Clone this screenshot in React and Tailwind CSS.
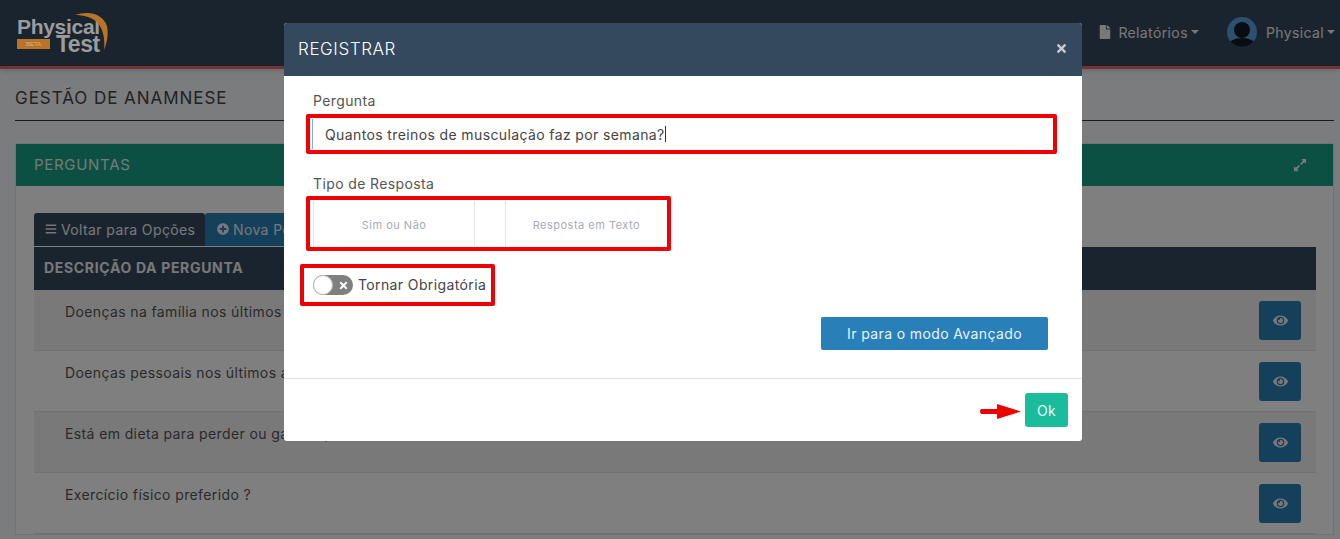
import React from 'react'
import { FaBars, FaEye, FaExpandAlt, FaFile, FaPlusCircle, FaTimes } from 'react-icons/fa'

const font = { fontFamily: 'Inter, "Noto Sans", sans-serif' }

const perguntas = [
  'Doenças na família nos últimos 12 meses ?',
  'Doenças pessoais nos últimos anos ?',
  'Está em dieta para perder ou ganhar peso ?',
  'Exercício físico preferido ?',
]

const Logo = () => (
  <div className="relative z-10 h-[35px] w-[96px] mt-[5px] text-[#9c9c9c] font-bold tracking-normal font-['Liberation_Sans']">
    <div className="text-[21px] leading-[17px] h-[17px] tracking-[-0.3px]">Physical</div>
    <div className="flex items-center gap-[6px] h-[18px]">
      <span className="bg-[#b8752a] text-[#d9ad7e] text-[6px] font-normal leading-none w-[33px] h-[10px] flex items-center justify-center">BETA</span>
      <span className="text-[23px] leading-[18px] tracking-[-0.5px]">Test</span>
    </div>
    <svg className="absolute left-[56px] top-[-6px]" width="38" height="42" viewBox="0 0 38 42" fill="none">
      <path d="M2 3 C16 -2 30 2 34 14 C36 24 33 33 31 38 C32 29 31 19 25 11 C19 5 10 3 2 3 Z" fill="#b8752a" />
    </svg>
  </div>
)

const Avatar = () => (
  <svg width="30" height="30" viewBox="0 0 30 30">
    <defs>
      <clipPath id="avatar-clip"><circle cx="15" cy="15" r="15" /></clipPath>
    </defs>
    <g clipPath="url(#avatar-clip)">
      <rect width="30" height="30" fill="#5a9ee0" />
      <circle cx="15" cy="13" r="8" fill="#131a22" />
      <ellipse cx="15" cy="29" rx="14" ry="8" fill="#131a22" />
    </g>
  </svg>
)

const Caret = () => (
  <span className="inline-block ml-[3px] align-middle border-x-[4px] border-x-transparent border-t-[4px] border-t-current" />
)

const Header = () => (
  <header className="h-[69px] bg-[#34495e] border-b-[3px] border-[#f0606e] shadow-md flex items-center justify-between pl-[17px] pr-[5px]">
    <Logo />
    <nav className="flex items-center text-[14px] text-[#f0f0f0] mb-[2px]">
      <FaFile className="w-[12px] h-[14px] mr-[7px]" />
      <span>Relatórios</span>
      <Caret />
      <span className="ml-[28px] mr-[9px]"><Avatar /></span>
      <span>Physical</span>
      <Caret />
    </nav>
  </header>
)

const Row = ({ text, striped }) => (
  <div className={`h-[61px] flex justify-between border-b border-[#dee2e6] pl-[31px] pr-[15px] pt-[11px] ${striped ? 'bg-[#f2f2f2]' : 'bg-white'}`}>
    <span className="text-[14px] text-[#555]">{text}</span>
    <button className="w-[42px] h-[39px] rounded-[3px] bg-[#2980b9] text-[#f0f0f0] flex items-center justify-center">
      <FaEye className="w-[15px] h-[15px]" />
    </button>
  </div>
)

const Page = () => (
  <div className="h-[539px] overflow-hidden bg-[#f6f9fc]">
    <Header />
    <main className="pl-[15px] pr-[6px]">
      <h1 className="text-[17px] tracking-[0.95px] text-[#444] h-[52px] pt-[17px] border-b border-[#333]">GESTÃO DE ANAMNESE</h1>
      <section className="mt-[22px] bg-white border border-[#e5e5e5]">
        <div className="h-[42px] bg-[#16a085] text-[#e8f5f2] text-[15px] tracking-[0.7px] flex items-center justify-between pl-[18px] pr-[26px]">
          <span>PERGUNTAS</span>
          <FaExpandAlt className="w-[14px] h-[14px]" />
        </div>
        <div className="pt-[27px] pl-[18px] pr-[17px]">
          <div className="flex h-[34px] text-[14px] pb-[1px]">
            <button className="w-[171px] bg-[#34495e] text-[#f0f0f0] rounded-t-[3px] flex items-center pl-[11px] pb-[1px] gap-[4px]">
              <FaBars className="w-[12px] h-[12px]" />
              Voltar para Opções
            </button>
            <button className="w-[171px] bg-[#2980b9] text-[#f0f0f0] rounded-t-[3px] flex items-center pl-[12px] pb-[1px] gap-[4px]">
              <FaPlusCircle className="w-[12px] h-[12px]" />
              Nova Pergunta
            </button>
          </div>
          <div className="h-[43px] bg-[#34495e] text-[#f0f0f0] text-[14px] tracking-[0.67px] font-bold flex items-center pl-[10px] pb-[2px]">DESCRIÇÃO DA PERGUNTA</div>
          {perguntas.map((p, i) => (
            <Row key={p} text={p} striped={i % 2 === 0} />
          ))}
        </div>
      </section>
    </main>
  </div>
)

const Modal = () => (
  <div className="absolute inset-0 bg-black/50 overflow-hidden">
    <div className="ml-[284px] mt-[23px] w-[798px] h-[418px] bg-white rounded-[3px] flex flex-col overflow-hidden">
      <div className="h-[53px] shrink-0 bg-[#34495e] text-white flex items-center justify-between pl-[14px] pr-[14px]">
        <span className="text-[17px] font-light tracking-[0.6px]">REGISTRAR</span>
        <FaTimes className="w-[13px] h-[13px] mb-[2px] text-[#c5cbd2]" />
      </div>
      <div className="h-[303px] shrink-0 pl-[16px] pt-[14px] text-[#555] text-[14px] flex flex-col items-start border-b border-[#dee2e6]">
        <label className="ml-[13px] h-[24px]">Pergunta</label>
        <div className="ml-[6px] w-[751px] h-[40px] border-[4px] border-[#f00000] rounded-[2px] px-[2px] py-[1px]">
          <div className="h-full border-l border-[#9aa7c0] pl-[12px] flex items-center text-[#444]">
            Quantos treinos de musculação faz por semana?
            <span className="inline-block w-px h-[16px] bg-[#333]" />
          </div>
        </div>
        <label className="ml-[13px] mt-[19px] h-[23px]">Tipo de Resposta</label>
        <div className="ml-[6px] h-[55px] w-[365px] border-[4px] border-[#f00000] rounded-[2px] pl-[3px] pt-[1px] flex items-stretch text-[11px] tracking-[0.5px] text-[#a5abb3]">
          <div className="w-[164px] border-x border-[#e4e4e4] flex items-center justify-center pt-[3px]">Sim ou Não</div>
          <div className="w-[30px]" />
          <div className="w-[164px] border-l border-[#e4e4e4] flex items-center justify-center pt-[3px]">Resposta em Texto</div>
        </div>
        <div className="mt-[13px] h-[42px] w-[195px] border-[4px] border-[#f00000] rounded-[2px] pl-[9px] flex items-center gap-[5px] text-[#444]">
          <span className="relative shrink-0 w-[40px] h-[20px] rounded-full bg-[#808080] flex items-center justify-end pr-[4px]">
            <span className="absolute left-0 top-0 w-[20px] h-[20px] rounded-full bg-white border border-[#bbb]" />
            <FaTimes className="w-[11px] h-[11px] text-white" />
          </span>
          <span className="mb-[2px]">Tornar Obrigatória</span>
        </div>
        <button className="ml-[521px] mt-[11px] w-[227px] h-[33px] rounded-[2px] bg-[#2980b9] text-[#e8f1f7] text-[14px]">Ir para o modo Avançado</button>
      </div>
      <div className="flex-1 flex items-center justify-end pr-[14px] gap-[4px]">
        <svg className="mt-[3px]" width="42" height="15" viewBox="0 0 42 15">
          <path d="M2 5 H18 V0 L42 7.5 L18 15 V10 H2 Q0 7.5 2 5 Z" fill="#f00000" />
        </svg>
        <button className="w-[43px] h-[34px] rounded-[3px] bg-[#1abc9c] text-[#e8f8f4] text-[14px]">Ok</button>
      </div>
    </div>
  </div>
)

export default function App() {
  return (
    <div className="relative h-[539px] overflow-hidden tracking-[0.38px]" style={font}>
      <Page />
      <Modal />
    </div>
  )
}
